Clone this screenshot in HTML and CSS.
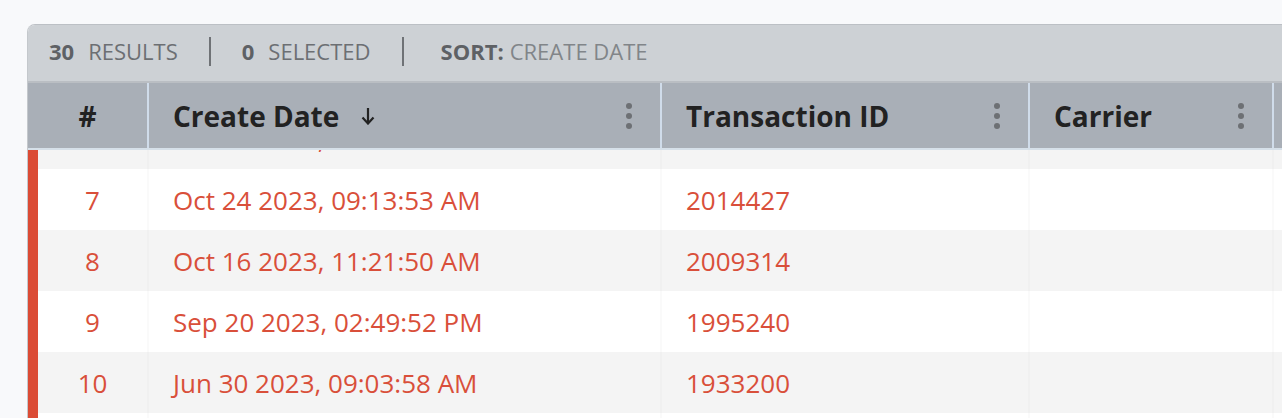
FILE: index.html
```html
<!DOCTYPE html>
<html lang="en">
<head>
    <meta charset="UTF-8">
    <meta name="viewport" content="width=device-width, initial-scale=1.0">
    <title>Transactions</title>
    <link rel="stylesheet" href="styles.css">
</head>
<body>
    <div class="card">
        <div class="toolbar">
            <div class="stat"><b>30</b><span>RESULTS</span></div>
            <div class="sep"></div>
            <div class="stat"><b>0</b><span>SELECTED</span></div>
            <div class="sep"></div>
            <div class="stat sort"><b>SORT:</b><span>CREATE DATE</span></div>
        </div>

        <div class="head">
            <div class="th center">#</div>
            <div class="th">
                <div class="th-label">Create Date
                    <svg class="sort-arrow" width="14" height="18" viewBox="0 0 14 18">
                        <path d="M7 1 V16" stroke="#222" stroke-width="2.2" fill="none"/>
                        <path d="M1.5 10.5 L7 16.5 L12.5 10.5" stroke="#222" stroke-width="2.2" fill="none"/>
                    </svg>
                </div>
                <svg class="dots" width="6" height="26" viewBox="0 0 6 26"><circle cx="3" cy="3" r="3"/><circle cx="3" cy="13" r="3"/><circle cx="3" cy="23" r="3"/></svg>
            </div>
            <div class="th">
                <div class="th-label">Transaction ID</div>
                <svg class="dots" width="6" height="26" viewBox="0 0 6 26"><circle cx="3" cy="3" r="3"/><circle cx="3" cy="13" r="3"/><circle cx="3" cy="23" r="3"/></svg>
            </div>
            <div class="th">
                <div class="th-label">Carrier</div>
                <svg class="dots" width="6" height="26" viewBox="0 0 6 26"><circle cx="3" cy="3" r="3"/><circle cx="3" cy="13" r="3"/><circle cx="3" cy="23" r="3"/></svg>
            </div>
            <div class="th"></div>
        </div>

        <div class="rows-wrap">
            <div class="rows">
                <div class="row alt">
                    <div class="td center">6</div>
                    <div class="td">Oct 26 2023, 10:42:18 AM</div>
                    <div class="td">2016035</div>
                    <div class="td"></div>
                    <div class="td"></div>
                </div>
                <div class="row">
                    <div class="td center">7</div>
                    <div class="td">Oct 24 2023, 09:13:53 AM</div>
                    <div class="td">2014427</div>
                    <div class="td"></div>
                    <div class="td"></div>
                </div>
                <div class="row alt">
                    <div class="td center">8</div>
                    <div class="td">Oct 16 2023, 11:21:50 AM</div>
                    <div class="td">2009314</div>
                    <div class="td"></div>
                    <div class="td"></div>
                </div>
                <div class="row">
                    <div class="td center">9</div>
                    <div class="td">Sep 20 2023, 02:49:52 PM</div>
                    <div class="td">1995240</div>
                    <div class="td"></div>
                    <div class="td"></div>
                </div>
                <div class="row alt">
                    <div class="td center">10</div>
                    <div class="td">Jun 30 2023, 09:03:58 AM</div>
                    <div class="td">1933200</div>
                    <div class="td"></div>
                    <div class="td"></div>
                </div>
                <div class="row">
                    <div class="td center">11</div>
                    <div class="td">May 12 2023, 04:15:07 PM</div>
                    <div class="td">1902118</div>
                    <div class="td"></div>
                    <div class="td"></div>
                </div>
            </div>
        </div>
    </div>
</body>
</html>
```

FILE: styles.css
```css
html, body{
    margin: 0;
    overflow: hidden;
}
body{
    background-color: #f8f9fb;
    font-family: "Open Sans", "DejaVu Sans", sans-serif;
}
.card{
    margin: 24px 0 0 27px;
    border-top: 1px solid #bcc0c5;
    border-left: 1px solid #c4c8cc;
    border-radius: 8px 0 0 0;
    overflow: hidden;
}

/* toolbar */
.toolbar{
    display: flex;
    align-items: center;
    height: 58px;
    padding: 0 0 4px 21px;
    box-sizing: border-box;
    background-color: #cdd1d5;
    border-bottom: 2px solid #babec3;
    font-size: 22px;
    color: #6c6f73;
}
.stat b{
    color: #5e6165;
    margin-right: 14px;
}
.sort{
    margin-left: 6px;
}
.sort b{
    margin-right: 6px;
}
.sort span{
    color: #818589;
}
.sep{
    width: 2px;
    height: 29px;
    background-color: #6f7276;
    margin: 0 31px;
}

/* header */
.head{
    display: grid;
    grid-template-columns: 121px 513px 368px 244px 1fr;
    height: 67px;
    box-sizing: border-box;
    background-color: #a9afb7;
    border-bottom: 2px solid #d6e0e9;
}
.th{
    display: flex;
    align-items: center;
    justify-content: space-between;
    padding: 0 28px 0 24px;
    border-right: 2px solid #d0dcea;
    font-size: 28px;
    font-weight: bold;
    color: #222;
    box-sizing: border-box;
}
.th.center{
    justify-content: center;
    padding: 0;
}
.th-label{
    display: flex;
    align-items: center;
}
.sort-arrow{
    margin-left: 22px;
}
.dots{
    fill: #6d7074;
}

/* rows */
.rows-wrap{
    height: 268px;
    overflow: hidden;
}
.rows{
    margin-top: -42px;
}
.row{
    display: grid;
    grid-template-columns: 111px 513px 368px 244px 1fr;
    height: 61px;
    background-color: #fff;
    border-left: 10px solid #db4b35;
    font-size: 26px;
    color: #d94f3a;
}
.row.alt{
    background-color: #f4f4f4;
}
.td{
    display: flex;
    align-items: center;
    padding-left: 24px;
    border-right: 2px solid #f0f0f0;
    white-space: nowrap;
}
.row:not(.alt) .td{
    border-right-color: #fafafa;
}
.td.center{
    justify-content: center;
    padding-left: 0;
}
```
